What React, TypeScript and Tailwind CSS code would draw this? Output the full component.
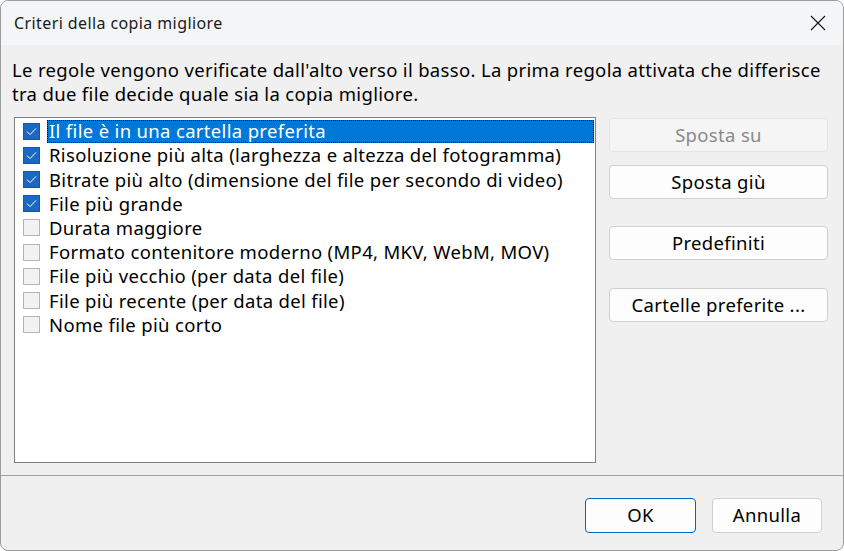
const rules = [
  { label: "Il file è in una cartella preferita", checked: true },
  { label: "Risoluzione più alta (larghezza e altezza del fotogramma)", checked: true },
  { label: "Bitrate più alto (dimensione del file per secondo di video)", checked: true },
  { label: "File più grande", checked: true },
  { label: "Durata maggiore", checked: false },
  { label: "Formato contenitore moderno (MP4, MKV, WebM, MOV)", checked: false },
  { label: "File più vecchio (per data del file)", checked: false },
  { label: "File più recente (per data del file)", checked: false },
  { label: "Nome file più corto", checked: false },
];

function CheckBox({ checked }: { checked: boolean }) {
  if (checked) {
    return (
      <div className="w-[17px] h-[17px] shrink-0 bg-[#1a68c2] border border-[#1458a8] flex items-center justify-center">
        <svg width="11" height="9" viewBox="0 0 11 9" fill="none">
          <path d="M1 4.6 L4 7.6 L10 1.4" stroke="#ffffff" strokeWidth="1" />
        </svg>
      </div>
    );
  }
  return <div className="w-[17px] h-[17px] shrink-0 bg-[#f2f2f2] border border-[#b4b4b4]" />;
}

function DialogButton({
  children,
  disabled,
  primary,
  className = "",
}: {
  children: React.ReactNode;
  disabled?: boolean;
  primary?: boolean;
  className?: string;
}) {
  let look = "bg-[#fdfdfd] border-[#d0d0d0] text-black";
  if (disabled) look = "bg-[#f5f5f5] border-[#e5e5e5] text-[#8a8a8a]";
  if (primary) look = "bg-[#fdfdfd] border-[#0067c0] text-black";
  return (
    <button
      className={`h-[34px] border rounded-[4px] text-[18.5px] tracking-[0.33px] leading-none flex items-center justify-center ${look} ${className}`}
    >
      {children}
    </button>
  );
}

export default function App() {
  return (
    <div
      className="w-[844px] h-[551px] bg-white"
      style={{ fontFamily: '"Noto Sans", "Open Sans", sans-serif' }}
    >
      <div className="w-full h-full border border-[#9c9c9c] rounded-[8px] overflow-hidden bg-[#f0f0f0] flex flex-col">
        {/* title bar */}
        <div className="h-[44px] shrink-0 bg-[#f4f5f7] flex items-center justify-between pl-[13px] pr-[17px]">
          <span className="text-[16px] tracking-[0.4px] text-[#1a1a1a]">Criteri della copia migliore</span>
          <svg width="16" height="16" viewBox="0 0 16 16" fill="none">
            <path d="M1 1 L15 15 M15 1 L1 15" stroke="#1a1a1a" strokeWidth="1.2" />
          </svg>
        </div>

        {/* description */}
        <p className="mt-[13px] pl-[11px] text-[18.5px] tracking-[0.33px] leading-[24px] text-black whitespace-nowrap">
          Le regole vengono verificate dall'alto verso il basso. La prima regola attivata che differisce
          <br />
          tra due file decide quale sia la copia migliore.
        </p>

        <div className="mt-[11px] flex pl-[13px]">
          {/* rule list */}
          <div className="w-[582px] h-[346px] bg-white border border-[#828282] pt-[1px]">
            {rules.map((r, i) => (
              <div key={r.label} className="h-[24.2px] flex items-center pl-[8px] pr-[1px]">
                <CheckBox checked={r.checked} />
                <div
                  className={`ml-[7px] flex-1 h-[23px] flex items-center pl-[2px] text-[18.5px] tracking-[0.33px] whitespace-nowrap ${
                    i === 0
                      ? "bg-[#0078d7] text-white outline outline-1 outline-dotted outline-[#000000] -outline-offset-1"
                      : "text-black"
                  }`}
                >
                  {r.label}
                </div>
              </div>
            ))}
          </div>

          {/* side buttons */}
          <div className="ml-[13px] w-[219px] flex flex-col pt-[1px]">
            <DialogButton disabled>Sposta su</DialogButton>
            <DialogButton className="mt-[13px]">Sposta giù</DialogButton>
            <DialogButton className="mt-[27px]">Predefiniti</DialogButton>
            <DialogButton className="mt-[28px]">Cartelle preferite ...</DialogButton>
          </div>
        </div>

        {/* footer */}
        <div className="mt-[12px] border-t border-[#a0a0a0] flex-1 flex justify-end items-start pt-[22px] pr-[21px] gap-[16px]">
          <DialogButton primary className="w-[111px] h-[35px]">OK</DialogButton>
          <DialogButton className="w-[110px] h-[35px]">Annulla</DialogButton>
        </div>
      </div>
    </div>
  );
}
